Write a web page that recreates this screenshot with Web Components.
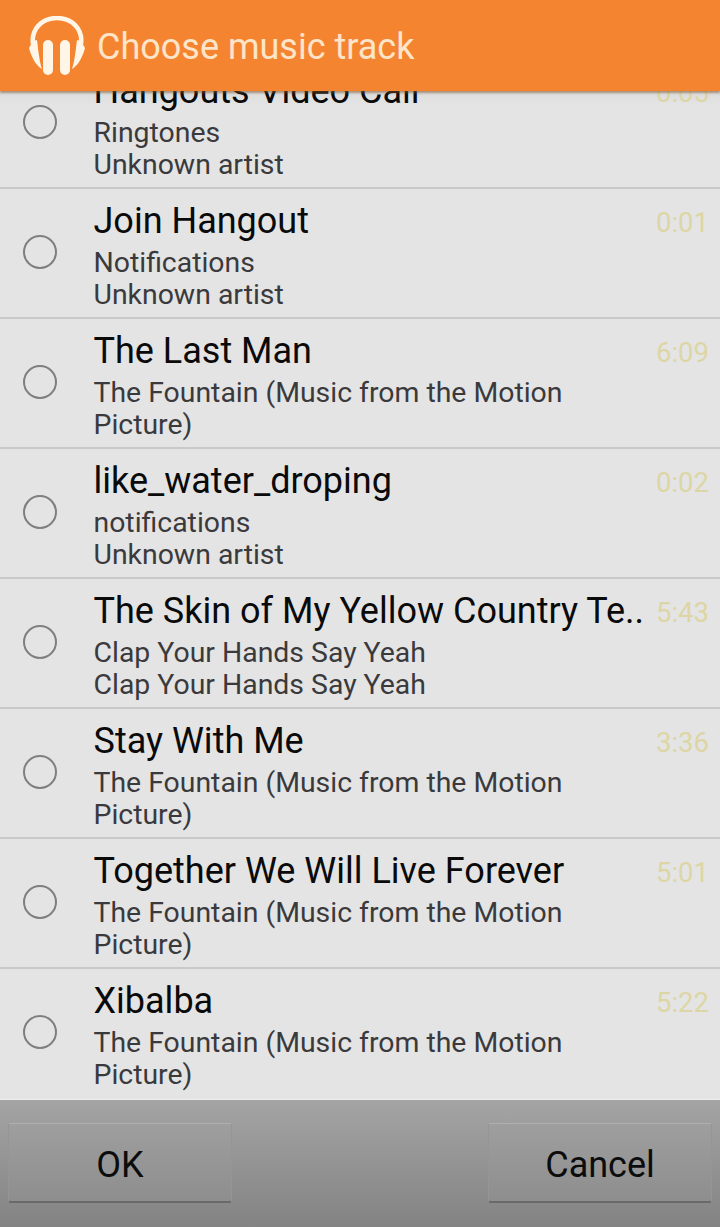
<!DOCTYPE html>
<html>
<head>
<meta charset="utf-8">
<style>
  html, body { margin: 0; padding: 0; }
  body { width: 720px; height: 1227px; overflow: hidden; font-family: Roboto, sans-serif; }
  chooser-app { height: 1227px; }
</style>
</head>
<body>
<chooser-app>
  <app-header slot="header">Choose music track</app-header>
  <track-row slot="rows" time="0:05" title="Hangouts Video Call" album="Ringtones" artist="Unknown artist"></track-row>
  <track-row slot="rows" time="0:01" title="Join Hangout" album="Notifications" artist="Unknown artist"></track-row>
  <track-row slot="rows" time="6:09" title="The Last Man" album="The Fountain (Music from the Motion Picture)"></track-row>
  <track-row slot="rows" time="0:02" title="like_water_droping" album="notifications" artist="Unknown artist"></track-row>
  <track-row slot="rows" time="5:43" title="The Skin of My Yellow Country Te.." album="Clap Your Hands Say Yeah" artist="Clap Your Hands Say Yeah"></track-row>
  <track-row slot="rows" time="3:36" title="Stay With Me" album="The Fountain (Music from the Motion Picture)"></track-row>
  <track-row slot="rows" time="5:01" title="Together We Will Live Forever" album="The Fountain (Music from the Motion Picture)"></track-row>
  <track-row slot="rows" time="5:22" title="Xibalba" album="The Fountain (Music from the Motion Picture)"></track-row>
  <bar-button slot="ok">OK</bar-button>
  <bar-button slot="cancel">Cancel</bar-button>
</chooser-app>

<script>
class ChooserApp extends HTMLElement {
  constructor() {
    super();
    this.attachShadow({mode: 'open'}).innerHTML = `
      <style>
        :host { display: flex; flex-direction: column; background: #e4e4e4; }
        .list { flex: 1; min-height: 0; overflow: hidden; background: linear-gradient(#dcdcdc, #e4e4e4 14px); }
        .rows { display: flex; flex-direction: column; margin-top: -32px; }
        .bar {
          height: 128px; box-sizing: border-box; border-top: 1px solid #eeeeee;
          display: flex; justify-content: space-between; align-items: flex-start;
          padding: 23px 8px 0;
          background: linear-gradient(#a4a4a4, #838383);
        }
      </style>
      <slot name="header"></slot>
      <div class="list"><div class="rows"><slot name="rows"></slot></div></div>
      <div class="bar"><slot name="ok"></slot><slot name="cancel"></slot></div>`;
  }
}

class AppHeader extends HTMLElement {
  constructor() {
    super();
    this.attachShadow({mode: 'open'}).innerHTML = `
      <style>
        :host {
          display: flex; align-items: center; gap: 11px; height: 91px; box-sizing: border-box;
          padding: 0 0 0 28px; background: #f58431; color: #fde5c9;
          font-size: 36px; position: relative; z-index: 1;
          box-shadow: 0 2px 2px rgba(120, 80, 40, .55);
        }
        svg { width: 58px; height: 60px; flex: none; }
        span { padding-top: 2px; }
      </style>
      <svg viewBox="0 0 58 60">
        <path d="M5 28 C3 13 14 2 29 2 C44 2 55 13 53 28" fill="none" stroke="#fff6e8" stroke-width="4.5"/>
        <path d="M5 25 L9 24 C10 31 11 44 14 53 C8 50 3 40 1 32 Z" fill="#fff6e8"/>
        <path d="M53 25 L49 24 C48 31 47 44 44 53 C50 50 55 40 57 32 Z" fill="#fff6e8"/>
        <rect x="15" y="24" width="10" height="35" rx="5" fill="#fff6e8"/>
        <rect x="32" y="24" width="10" height="35" rx="5" fill="#fff6e8"/>
      </svg>
      <span><slot></slot></span>`;
  }
}

class TrackRow extends HTMLElement {
  constructor() {
    super();
    this.attachShadow({mode: 'open'}).innerHTML = `
      <style>
        :host {
          display: grid; grid-template-columns: 93.5px 1fr 66px; height: 130px; box-sizing: border-box;
          border-bottom: 2px solid #c9c9c9;
        }
        :host(:last-of-type) { border-bottom-color: transparent; }
        .radio { align-self: center; justify-self: start; margin: 0 0 2px 23px; width: 34px; height: 34px;
          box-sizing: border-box; border: 2px solid #7f7f7f; border-radius: 50%; }
        .text { min-width: 0; padding-top: 11px; }
        .title { font-size: 36px; line-height: 42px; height: 42px; color: #0a0a0a; white-space: nowrap; }
        .sub { font-size: 28.4px; line-height: 32px; color: #3a3a3c; margin-top: 5px; }
        .time { font-size: 27.5px; line-height: 32px; color: #ddd6a4; margin-top: 18px; padding-right: 11px; text-align: right; }
      </style>
      <div class="radio"></div>
      <div class="text">
        <div class="title"></div>
        <div class="sub"></div>
      </div>
      <div class="time"></div>`;
  }
  connectedCallback() {
    const s = this.shadowRoot;
    s.querySelector('.title').textContent = this.getAttribute('title');
    s.querySelector('.time').textContent = this.getAttribute('time');
    const sub = s.querySelector('.sub');
    sub.textContent = this.getAttribute('album');
    if (this.hasAttribute('artist')) {
      sub.appendChild(document.createElement('br'));
      sub.appendChild(document.createTextNode(this.getAttribute('artist')));
    }
    this.removeAttribute('title');
  }
}

class BarButton extends HTMLElement {
  constructor() {
    super();
    this.attachShadow({mode: 'open'}).innerHTML = `
      <style>
        :host {
          display: flex; align-items: center; justify-content: center;
          width: 224px; height: 80px; box-sizing: border-box; padding-top: 5px;
          background: linear-gradient(#9e9e9e, #8e8e8e);
          border-top: 1px solid #b0b0b0; border-bottom: 2px solid #6a6a6a;
          border-left: 1px solid #959595; border-right: 1px solid #959595;
          border-radius: 3px; color: #0c0c0c; font-size: 36px;
        }
      </style>
      <slot></slot>`;
  }
}

customElements.define('chooser-app', ChooserApp);
customElements.define('app-header', AppHeader);
customElements.define('track-row', TrackRow);
customElements.define('bar-button', BarButton);
</script>
</body>
</html>
